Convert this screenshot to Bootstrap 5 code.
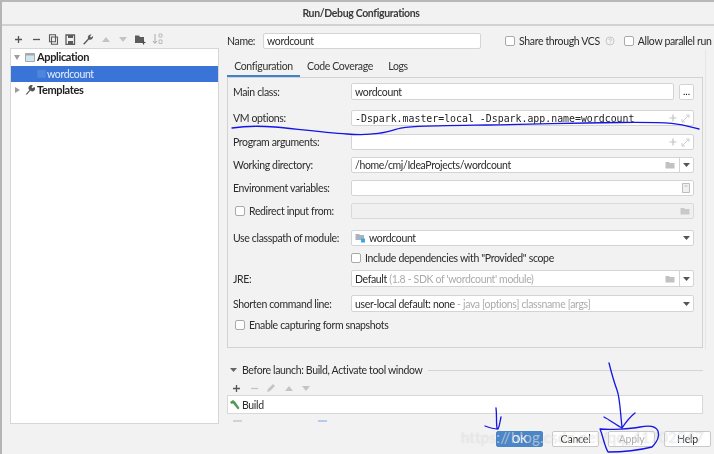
<!DOCTYPE html>
<html lang="en"><head><meta charset="utf-8"><title>Run/Debug Configurations</title>
<link href="https://cdn.jsdelivr.net/npm/bootstrap@5.3.0/dist/css/bootstrap.min.css" rel="stylesheet">
<style>
html,body{margin:0;height:454px;overflow:hidden}
body{width:714px;background:#f2f2f2;color:#2b2b2b;font:10.5px/16px Lato,"Noto Sans",sans-serif;letter-spacing:-.35px;position:relative}
.frame{border-left:2px solid #b5b5b5;border-top:2px solid #b8b8b8;height:454px;filter:blur(.3px)}
.titlebar{height:24px;border-bottom:2px solid #d2d2d2;font-weight:700;color:#3a3a3a;text-align:center;line-height:23px;padding-left:6px}
.sidebar{width:217px;padding-left:8px;flex:none}
.tb{height:22px;padding-top:4px;gap:0}
.tb svg{display:block;flex:none}
.tb .ti{width:17.4px;display:flex;justify-content:center;align-items:center;height:16px}
.tree{width:209px;height:376px;background:#fff;border:1px solid #d6d6d6;margin-top:2px}
.tnode{height:16.5px;display:flex;align-items:center;padding-left:1px;line-height:16px;font-weight:700;color:#222;font-size:11px}
.tnode svg{flex:none}
.tnode.sel{background:#3a74d6;color:#e4eefc;font-weight:400;font-size:10.5px;padding-left:26px;gap:1px}
.rpane{width:487px;flex:none;padding-left:8px}
.namerow{height:16px;margin-top:7px;display:flex;align-items:center}
.nlabel{width:36px;flex:none}
.fbox{background:#fff;border:1px solid #d4d4d4;border-radius:2px;height:16px;line-height:14px;padding:0 3px;display:flex;align-items:center;min-width:0;box-shadow:none;font-size:10.5px;color:#2b2b2b}
.fbox.form-control{min-height:0;border-radius:2px;padding:0 3px;font:10.5px Lato,sans-serif;letter-spacing:-.35px}
.nmbox.form-control{width:218px;flex:none}
.cbx{width:10px;height:10px;margin:0;border:1px solid #a9a9a9;border-radius:2px;background:#fff;display:inline-block;flex:none}
.cbrow{display:flex;align-items:center;gap:4px;white-space:nowrap}
.qmark{margin:0 9px 0 5px;flex:none}
.tabs{height:20px;margin-top:8px;gap:0}
.tabs .nav-link{padding:0;border:0;color:#333;background:none;font-size:10.5px;height:20px;line-height:19px;border-radius:0;text-align:center}
.tabs .nav-link.active{border-bottom:2px solid #4083c9;color:#333}
.tab1{width:73px}.tab2{width:80px}.tab3{width:36px}
.cfgpanel{width:476px;height:271px;border:1px solid #d2d2d2;padding:5px 8px 0 5px}
.thumb{width:5px;height:300px;background:#e6e6e6;margin-left:2px}
.frow{display:flex;align-items:center;height:16px}
.flabel{width:118px;flex:none;white-space:nowrap}
.flabel.cbrow{padding-left:2px}
.ffield{width:343px;flex:none;height:100%;display:flex;align-items:center}
.ffield .fbox{width:100%;height:100%;justify-content:space-between}
.ffield .fbox.short{width:323px;flex:none}
.dots{width:15px;height:16px;margin-left:5px;background:#fff;border:1px solid #d4d4d4;border-radius:2px;font-size:10px;line-height:11px;text-align:center;flex:none;padding:0}
.mono{font:9.9px "DejaVu Sans Mono","Liberation Mono",monospace;letter-spacing:0;color:#222}
.mut{color:#ababab}
.ffield .fbox.dis{background:#f0f0f0;border-color:#d9d9d9}
.icons{display:flex;align-items:center;gap:4px;flex:none}
.splitd{border-left:1px solid #d4d4d4;width:14px;height:100%;display:flex;align-items:center;justify-content:center;margin-right:-3px;margin-left:4px;flex:none}
.g4{margin-top:4px}.g5{margin-top:5px}.g7{margin-top:7px}.g8{margin-top:8px}.g10{margin-top:10px}.g11{margin-top:11px}
.h17{height:17px}
.blhead{margin-top:13px;height:16px;padding-left:3px;display:flex;align-items:center;gap:5px;white-space:nowrap;width:476px}
.blhead hr{flex:1;margin:0 0 0 1px;border:0;border-top:1px solid #d4d4d4;opacity:1}
.tb.bltb{height:17px;padding-left:1px;padding-top:2px}
.buildbox{width:476px;height:19px;background:#fff;border:1px solid #d8d8d8;display:flex;align-items:center;gap:2px;padding-left:1px}
.peek{height:2px;margin-top:6px;display:flex;width:476px;padding-left:6px}
.peek i{display:block;width:9px;height:2px;background:#d2d2d2}
.peek i.b{background:#b4cdec;margin-left:76px}
.footer{margin-top:9px;height:16px;gap:9px;display:flex;width:484px;justify-content:flex-end}
.dbtn{height:16px;width:47px;padding:0;line-height:14px;border:1px solid #c8c8c8;border-radius:2px;background:#fff;color:#2b2b2b;--bs-btn-font-size:10.5px;flex:none;letter-spacing:-.2px}
.dbtn.btn-primary{background:#4a86c8;border-color:#4a86c8;color:#fff}
.dbtn.off{color:#adadad}
.ink{position:absolute;left:0;top:0;pointer-events:none}
.wm{position:absolute;left:461px;top:427px;font:15px/20px Lato,sans-serif;letter-spacing:.25px;color:rgba(255,255,255,.5);text-shadow:0 0 1px rgba(120,120,120,.3);white-space:nowrap;pointer-events:none}
</style></head><body>
<div class="frame">
  <div class="titlebar">Run/Debug Configurations</div>
  <div class="d-flex">
    <div class="sidebar">
      <div class="tb d-flex" style="padding-top:5px;height:20px">
        <span class="ti"><svg width="9" height="9"><path d="M4.5 1v7M1 4.5h7" stroke="#555" stroke-width="1.3"/></svg></span>
        <span class="ti"><svg width="9" height="9"><path d="M1 4.5h7" stroke="#555" stroke-width="1.3"/></svg></span>
        <span class="ti"><svg width="11" height="11"><path d="M1.5.8h6v7h-6zM3.5 3h6v7.3h-6z" fill="#f2f2f2" stroke="#5c5c5c" stroke-width="1.1"/></svg></span>
        <span class="ti"><svg width="11" height="11"><path d="M1 1h8.500v9.500H1z" fill="none" stroke="#5c5c5c" stroke-width="1.3"/><path d="M3 1h5v3H3zM3 7h5v3H3z" fill="#5c5c5c"/></svg></span>
        <span class="ti"><svg width="12" height="12"><path d="M1 11l5-5.500A3 3 0 0 1 9.500 1.500L8 3.500l1 1 2-1.500A3 3 0 0 1 7 6.500L2.500 11.500z" fill="#5c5c5c"/></svg></span>
        <span class="ti"><svg width="10" height="7"><path d="M5 1l4 5H1z" fill="#c4c4c4"/></svg></span>
        <span class="ti"><svg width="10" height="7"><path d="M5 6l4-5H1z" fill="#c4c4c4"/></svg></span>
        <span class="ti"><svg width="12" height="11"><path d="M1 1.500h4l1 1.500h4v6H1z" fill="#5c5c5c"/><path d="M9.500 6.500v4M7.500 8.500h4" stroke="#4a4a4a" stroke-width="1.2"/></svg></span>
        <span class="ti"><svg width="11" height="12"><path d="M3 1v9M1 8l2 2.500L5 8" fill="none" stroke="#aaa" stroke-width="1"/><path d="M7 1h3v3H7zM7 7h3v3.500H7z" fill="none" stroke="#b5b5b5" stroke-width=".9"/></svg></span>
      </div>
      <div class="tree">
        <div class="tnode"><svg width="8" height="7" style="margin-left:1px"><path d="M1 1h6L4 6z" fill="#9c9c9c"/></svg><svg width="10" height="10" style="margin:0 2px 0 4px"><path d="M.5 1.500h9v8h-9z" fill="#cfe7f5" stroke="#a8a8a8"/><path d="M.5 1.500h9v2h-9z" fill="#a8a8a8"/></svg>Application</div>
        <div class="tnode sel"><svg width="9" height="9"><path d="M.5 1h8v7.500h-8z" fill="#4f86dd" stroke="#4a80d8"/></svg>wordcount</div>
        <div class="tnode"><svg width="7" height="8" style="margin-left:2px"><path d="M1 1v6l5-3z" fill="#9c9c9c"/></svg><svg width="10" height="10" style="margin:0 2px 0 4px"><path d="M.5 9.500l4-4.500A2.600 2.600 0 0 1 8 .8L6.500 2.300l1 1 1.800-1.400A2.600 2.600 0 0 1 5.500 5.500l-3.500 4z" fill="#555"/></svg>Templates</div>
      </div>
    </div>
    <div class="rpane">
      <div class="namerow">
        <span class="nlabel">Name:</span>
        <input class="form-control fbox nmbox" value="wordcount" aria-label="Name">
        <span class="cbrow" style="margin-left:24px"><span class="cbx"></span>Share through VCS</span>
        <svg width="10" height="10" class="qmark"><circle cx="5" cy="5" r="4" fill="none" stroke="#c6c6c6"/><path d="M3.800 4a1.300 1.300 0 1 1 1.500 1.300V6.300M5.200 7.300v.6" fill="none" stroke="#c0c0c0" stroke-width=".8"/></svg>
        <span class="cbrow"><span class="cbx"></span>Allow parallel run</span>
      </div>
      <div class="d-flex">
        <div>
          <ul class="nav tabs">
            <li class="nav-item"><a class="nav-link active tab1" href="#">Configuration</a></li>
            <li class="nav-item"><a class="nav-link tab2" href="#">Code Coverage</a></li>
            <li class="nav-item"><a class="nav-link tab3" href="#">Logs</a></li>
          </ul>
          <div class="cfgpanel">
            <div class="frow h17"><span class="flabel">Main class:</span><div class="ffield"><span class="fbox short">wordcount</span><button type="button" class="dots">...</button></div></div>
            <div class="frow g10"><span class="flabel">VM options:</span><div class="ffield"><span class="fbox"><span class="mono">-Dspark.master=local -Dspark.app.name=wordcount</span><span class="icons"><svg width="8" height="8"><path d="M4 .5v7M.5 4h7" stroke="#c4c4c4" stroke-width="1.200"/></svg><svg width="9" height="9"><path d="M1 8l7-7M5 1h3v3M1 5v3h3" fill="none" stroke="#c9c9c9" stroke-width=".9"/></svg></span></span></div></div>
            <div class="frow g8"><span class="flabel">Program arguments:</span><div class="ffield"><span class="fbox"><span></span><span class="icons"><svg width="8" height="8"><path d="M4 .5v7M.5 4h7" stroke="#c4c4c4" stroke-width="1.200"/></svg><svg width="9" height="9"><path d="M1 8l7-7M5 1h3v3M1 5v3h3" fill="none" stroke="#c9c9c9" stroke-width=".9"/></svg></span></span></div></div>
            <div class="frow g7"><span class="flabel">Working directory:</span><div class="ffield"><span class="fbox"><span>/home/cmj/IdeaProjects/wordcount</span><span class="icons" style="gap:0;height:100%"><svg width="10" height="8"><path d="M.5 1h3.500l1 1h4.500v5.500H.5z" fill="#c2c2c2"/></svg><span class="splitd"><svg width="7" height="4"><path d="M0 0h7L3.500 4z" fill="#555"/></svg></span></span></span></div></div>
            <div class="frow g7"><span class="flabel">Environment variables:</span><div class="ffield"><span class="fbox"><span></span><svg width="8" height="10"><path d="M.5.500h7v9h-7z" fill="#f0f0f0" stroke="#bdbdbd"/><path d="M2.500 3h3" stroke="#bdbdbd"/></svg></span></div></div>
            <div class="frow g7"><span class="flabel cbrow"><span class="cbx"></span>Redirect input from:</span><div class="ffield"><span class="fbox dis"><span></span><svg width="10" height="8"><path d="M.5 1h3.500l1 1h4.500v5.500H.5z" fill="#c9c9c9"/></svg></span></div></div>
            <div class="frow g11"><span class="flabel">Use classpath of module:</span><div class="ffield"><span class="fbox"><span class="d-flex align-items-center gap-1"><svg width="10" height="10"><path d="M.5 1h3.500l1 1h4v5H.5z" fill="#a9b4bf"/><path d="M6 5.500h4v4H6z" fill="#39a8e6"/></svg>wordcount</span><svg width="7" height="4"><path d="M0 0h7L3.500 4z" fill="#555"/></svg></span></div></div>
            <div class="frow g4"><span class="flabel"></span><span class="cbrow"><span class="cbx"></span>Include dependencies with "Provided" scope</span></div>
            <div class="frow g4 h17"><span class="flabel">JRE:</span><div class="ffield"><span class="fbox"><span>Default <span class="mut">(1.8 - SDK of 'wordcount' module)</span></span><span class="icons" style="gap:0;height:100%"><svg width="10" height="8"><path d="M.5 1h3.500l1 1h4.500v5.500H.5z" fill="#c2c2c2"/></svg><span class="splitd"><svg width="7" height="4"><path d="M0 0h7L3.500 4z" fill="#555"/></svg></span></span></span></div></div>
            <div class="frow g8 h17"><span class="flabel">Shorten command line:</span><div class="ffield"><span class="fbox"><span>user-local default: none <span class="mut">- java [options] classname [args]</span></span><svg width="7" height="4"><path d="M0 0h7L3.500 4z" fill="#555"/></svg></span></div></div>
            <div class="frow g5 cbrow" style="padding-left:2px"><span class="cbx"></span>Enable capturing form snapshots</div>
          </div>
        </div>
        <div class="thumb"></div>
      </div>
      <div class="blhead"><svg width="7" height="4"><path d="M0 0h7L3.500 4z" fill="#666"/></svg><span>Before launch: Build, Activate tool window</span><hr></div>
      <div class="tb d-flex bltb">
        <span class="ti"><svg width="9" height="9"><path d="M4.500 1v7M1 4.500h7" stroke="#555" stroke-width="1.300"/></svg></span>
        <span class="ti"><svg width="9" height="9"><path d="M1 4.500h7" stroke="#c4c4c4" stroke-width="1.300"/></svg></span>
        <span class="ti"><svg width="10" height="10"><path d="M1 9l1-3 5-5 2 2-5 5z" fill="#c4c4c4"/></svg></span>
        <span class="ti"><svg width="10" height="7"><path d="M5 1l4 5H1z" fill="#c4c4c4"/></svg></span>
        <span class="ti"><svg width="10" height="7"><path d="M5 6l4-5H1z" fill="#c4c4c4"/></svg></span>
      </div>
      <div class="buildbox"><svg width="11" height="11"><path d="M1 3l3-2 2 1.500L10.500 9 9 10.500 4 4.500 2.500 5z" fill="#4f9a5a"/></svg><span>Build</span></div>
      <div class="peek"><i></i><i class="b"></i></div>
      <div class="footer">
        <button type="button" class="btn dbtn btn-primary">OK</button>
        <button type="button" class="btn dbtn">Cancel</button>
        <button type="button" class="btn dbtn off">Apply</button>
        <button type="button" class="btn dbtn">Help</button>
      </div>
    </div>
  </div>
</div>
<div class="wm">https://blog.csdn.net/qq_41702847</div>
<svg class="ink" width="714" height="454" fill="none" stroke="#1414e6" stroke-width="1.300" stroke-linecap="round" stroke-linejoin="round">
  <path d="M232 128C245 126 262 126 275 127S320 132 347 134 387 132 397 129 420 126 487 125 560 123 620 122.500 680 124 699 129"/>
  <path d="M609 363C612 375 614 382 617 390S620 410 622 427M604 417C610 420 616 425 622 428 626 422 631 416 635 413"/>
  <path d="M600 429C603 436 604 445 608 452 625 452 640 450 652 447 657 442 660 437 658 431 656 426 650 425 640 427S610 430 600 429"/>
  <path d="M496 408C497 415 496 422 497 428M485 426C490 428 494 429 498 429 500 425 500 421 501 417"/>
</svg>
<script src="https://cdn.jsdelivr.net/npm/bootstrap@5.3.0/dist/js/bootstrap.bundle.min.js"></script>
</body></html>
